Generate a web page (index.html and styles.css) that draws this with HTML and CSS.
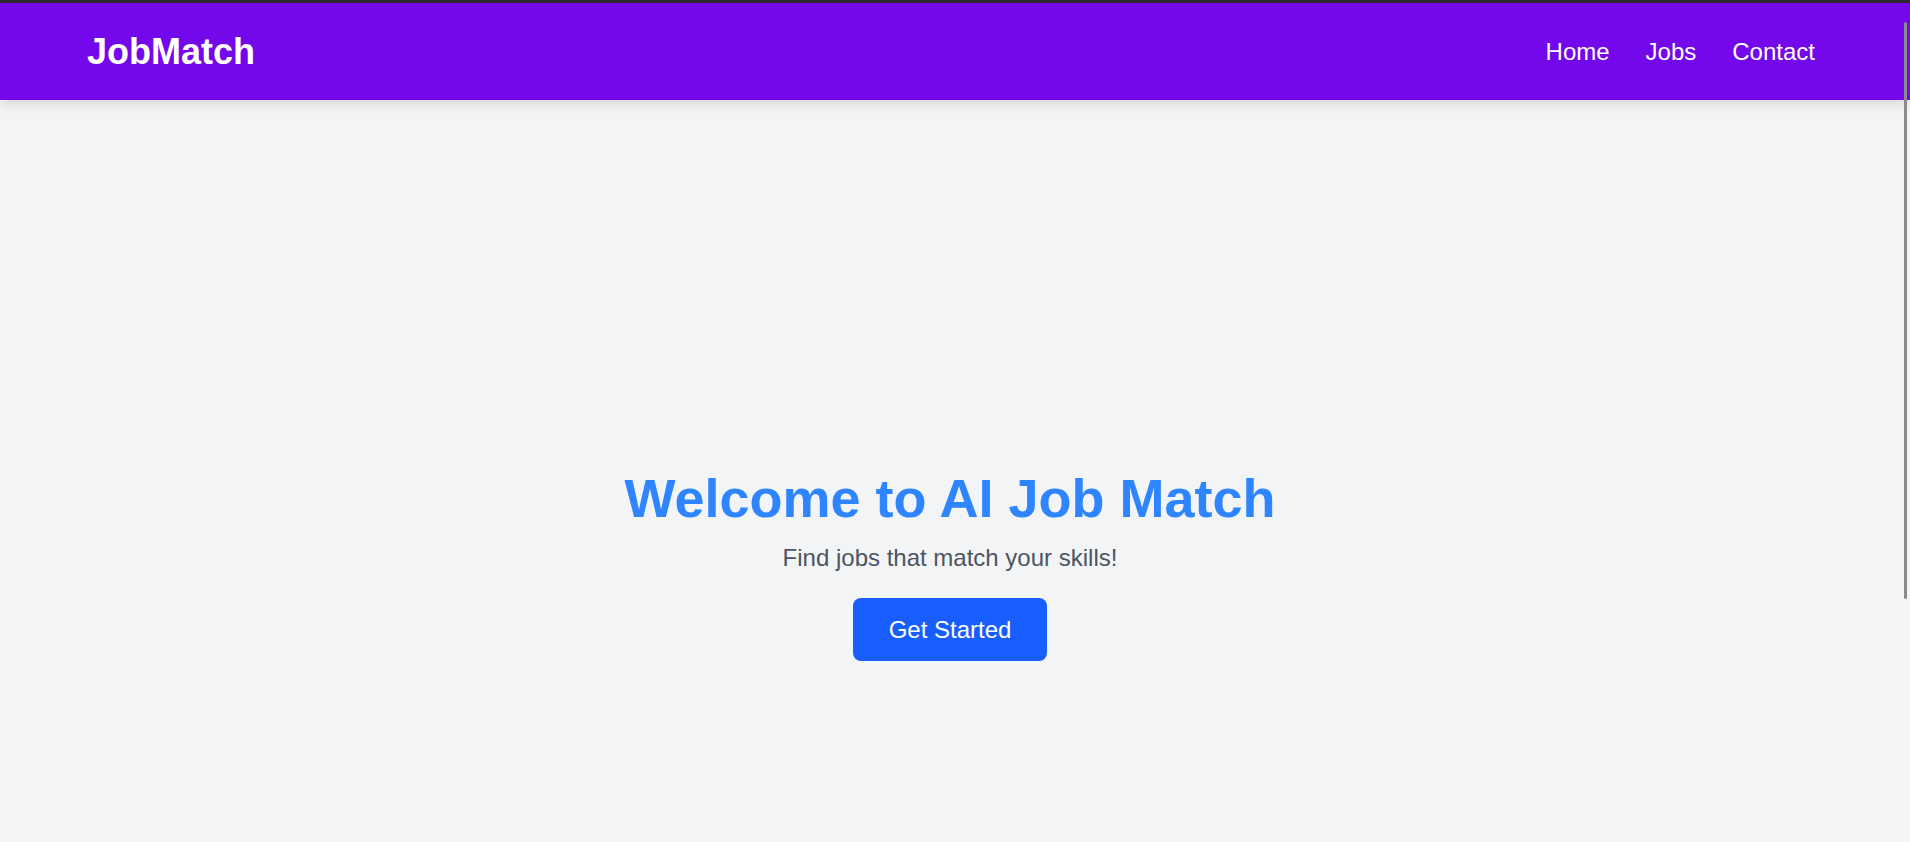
FILE: index.html
```html
<!DOCTYPE html>
<html lang="en">
<head>
<meta charset="utf-8">
<title>JobMatch</title>
<link rel="stylesheet" href="styles.css">
</head>
<body>
<div class="topline"></div>
<header class="site-header">
  <a class="logo" href="#">JobMatch</a>
  <nav class="nav">
    <a href="#">Home</a>
    <a href="#">Jobs</a>
    <a href="#">Contact</a>
  </nav>
</header>
<main class="hero">
  <h1 class="hero-title">Welcome to AI Job Match</h1>
  <p class="hero-sub">Find jobs that match your skills!</p>
  <button class="hero-btn" type="button">Get Started</button>
</main>
<div class="scroll-thumb"></div>
</body>
</html>
```

FILE: styles.css
```css
html, body {
  margin: 0;
  padding: 0;
  height: 100%;
  overflow: hidden;
}

body {
  background: #f3f4f6;
  font-family: "Liberation Sans", Arial, sans-serif;
}

.topline {
  height: 3px;
  background: #2b2a31;
}

.site-header {
  position: relative;
  z-index: 2;
  height: 97px;
  background: #7308ea;
  display: flex;
  align-items: center;
  justify-content: space-between;
  padding: 0 95px 0 87px;
  box-shadow: 0 4px 12px rgba(0, 0, 0, 0.12);
}

.logo {
  color: #ffffff;
  font-weight: 700;
  font-size: 36px;
  text-decoration: none;
  line-height: 1;
}

.nav {
  display: flex;
  gap: 36px;
}

.nav a {
  color: #ffffff;
  font-size: 24px;
  text-decoration: none;
  line-height: 1;
}

.hero {
  display: flex;
  flex-direction: column;
  align-items: center;
  padding: 367px 10px 0 0;
}

.hero-title {
  margin: 0 0 15px;
  font-size: 54px;
  font-weight: 700;
  color: #2e85ff;
  line-height: 62px;
}

.hero-sub {
  margin: 0 0 26px;
  font-size: 24px;
  color: #4b5563;
  line-height: 28px;
}

.hero-btn {
  font-family: inherit;
  font-size: 24px;
  line-height: 27px;
  color: #ffffff;
  background: #185eff;
  border: none;
  border-radius: 8px;
  padding: 18px 36px;
  cursor: pointer;
}

.scroll-thumb {
  position: fixed;
  top: 22px;
  right: 3px;
  width: 3px;
  height: 577px;
  background: #8a8a8a;
  border-radius: 2px;
  z-index: 5;
}
```
